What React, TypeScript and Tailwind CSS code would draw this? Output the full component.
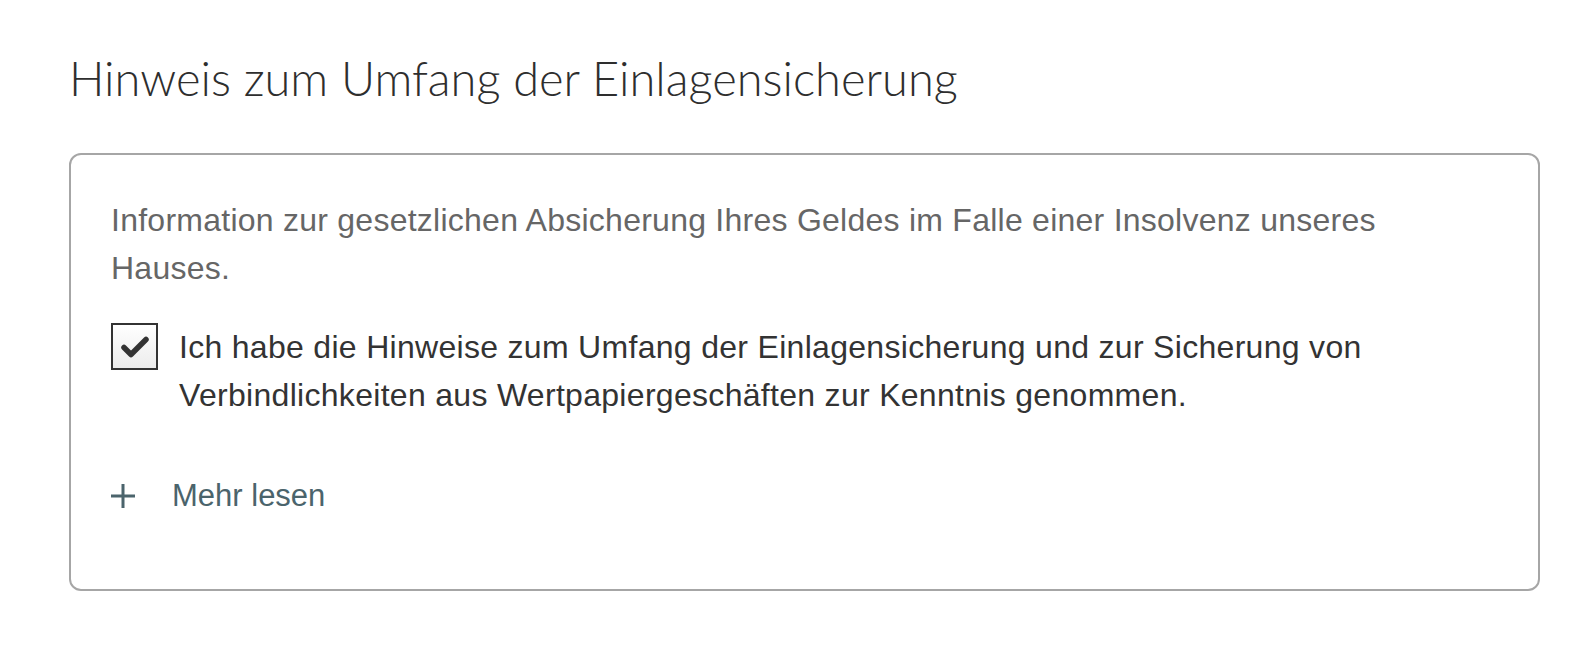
import React from 'react';

export default function App() {
  return (
    <div className="min-h-[652px] bg-white pl-[69px] pr-[32px] pt-[50px]" style={{ fontFamily: '"Liberation Sans", Arial, sans-serif' }}>
      <h1 className="text-[47px] leading-[56px] text-[#2e2e2e] font-light" style={{ fontFamily: 'Lato, "Liberation Sans", sans-serif' }}>
        Hinweis zum Umfang der Einlagensicherung
      </h1>

      <div className="mt-[47px] rounded-[12px] border-2 border-[#a6a6a6] pl-[40px] pr-[113px] pt-[41px] pb-[69px]">
        <p className="text-[32px] leading-[48px] tracking-[0.25px] text-[#666]">
          Information zur gesetzlichen Absicherung Ihres Geldes im Falle einer Insolvenz unseres Hauses.
        </p>

        {/* Checkbox */}
        <label className="mt-[31px] flex items-start gap-[21px]">
          <span className="flex h-[47px] w-[47px] shrink-0 items-center justify-center border-2 border-[#333] bg-gradient-to-b from-white to-[#ececec]">
            <svg width="30" height="24" viewBox="0 0 30 24" fill="none">
              <path d="M4 12.5 L11 19.5 L26 4.5" stroke="#333" strokeWidth="5.5" strokeLinecap="round" strokeLinejoin="round" />
            </svg>
          </span>
          <span className="text-[32px] leading-[48px] tracking-[0.3px] text-[#333]">
            Ich habe die Hinweise zum Umfang der Einlagensicherung und zur Sicherung von Verbindlichkeiten aus Wertpapiergeschäften zur Kenntnis genommen.
          </span>
        </label>

        {/* Mehr lesen */}
        <button className="mt-[53px] flex items-center gap-[37px] text-[#4b646c]">
          <svg width="24" height="24" viewBox="0 0 24 24" fill="none">
            <path d="M12 0 V24 M0 12 H24" stroke="currentColor" strokeWidth="3" />
          </svg>
          <span className="text-[31px] leading-[48px]">Mehr lesen</span>
        </button>
      </div>
    </div>
  );
}
